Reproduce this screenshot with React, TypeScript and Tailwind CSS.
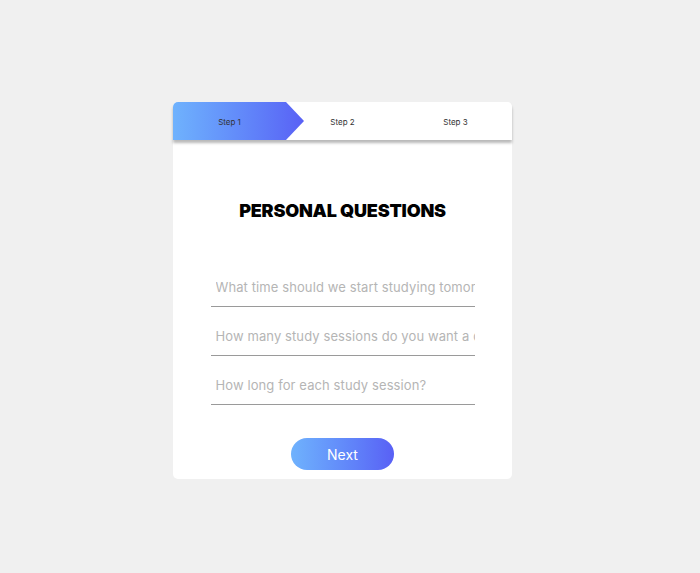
const FONT = { fontFamily: "Inter, 'Open Sans', sans-serif" };

const STEPS = ['Step 1', 'Step 2', 'Step 3'];
const QUESTIONS = [
  'What time should we start studying tomorrow?',
  'How many study sessions do you want a day?',
  'How long for each study session?',
];

export default function App() {
  return (
    <div className="min-h-screen bg-[#f0f0f0] flex justify-center pt-[102px] pr-[15px]" style={FONT}>
      <div className="w-[339px] h-[377px] bg-white rounded-[5px] flex flex-col items-center">
        <div className="w-full h-[38px] flex rounded-t-[5px] bg-white shadow-[0_3px_3px_rgba(0,0,0,0.28)] relative z-10">
          {STEPS.map((s, i) => (
            <div key={s} className="flex-1 relative flex items-center justify-center pt-[2px]">
              {i === 0 && (
                <div className="absolute inset-y-0 left-0 w-[131px] rounded-tl-[5px] bg-gradient-to-r from-[#6fb2fd] to-[#5960f5] [clip-path:polygon(0_0,113px_0,131px_50%,113px_100%,0_100%)]" />
              )}
              <span className="relative text-[8px] text-[#333]">{s}</span>
            </div>
          ))}
        </div>

        <h1 className="mt-[57px] text-[18px] leading-[28px] font-black text-black tracking-[-0.2px]">
          PERSONAL QUESTIONS
        </h1>

        <div className="mt-[42px] w-[264px] flex flex-col gap-[9px]">
          {QUESTIONS.map((q) => (
            <input
              key={q}
              placeholder={q}
              className="h-[40px] w-full border-b border-[#9a9a9a] pl-[5px] text-[13px] tracking-[0.1px] text-[#555] placeholder:text-[#b5b5b5] outline-none bg-transparent"
            />
          ))}
        </div>

        <button className="mt-[33px] w-[103px] h-[32px] rounded-full bg-gradient-to-r from-[#6fb2fd] to-[#5960f5] text-white text-[14px]">
          Next
        </button>
      </div>
    </div>
  );
}
